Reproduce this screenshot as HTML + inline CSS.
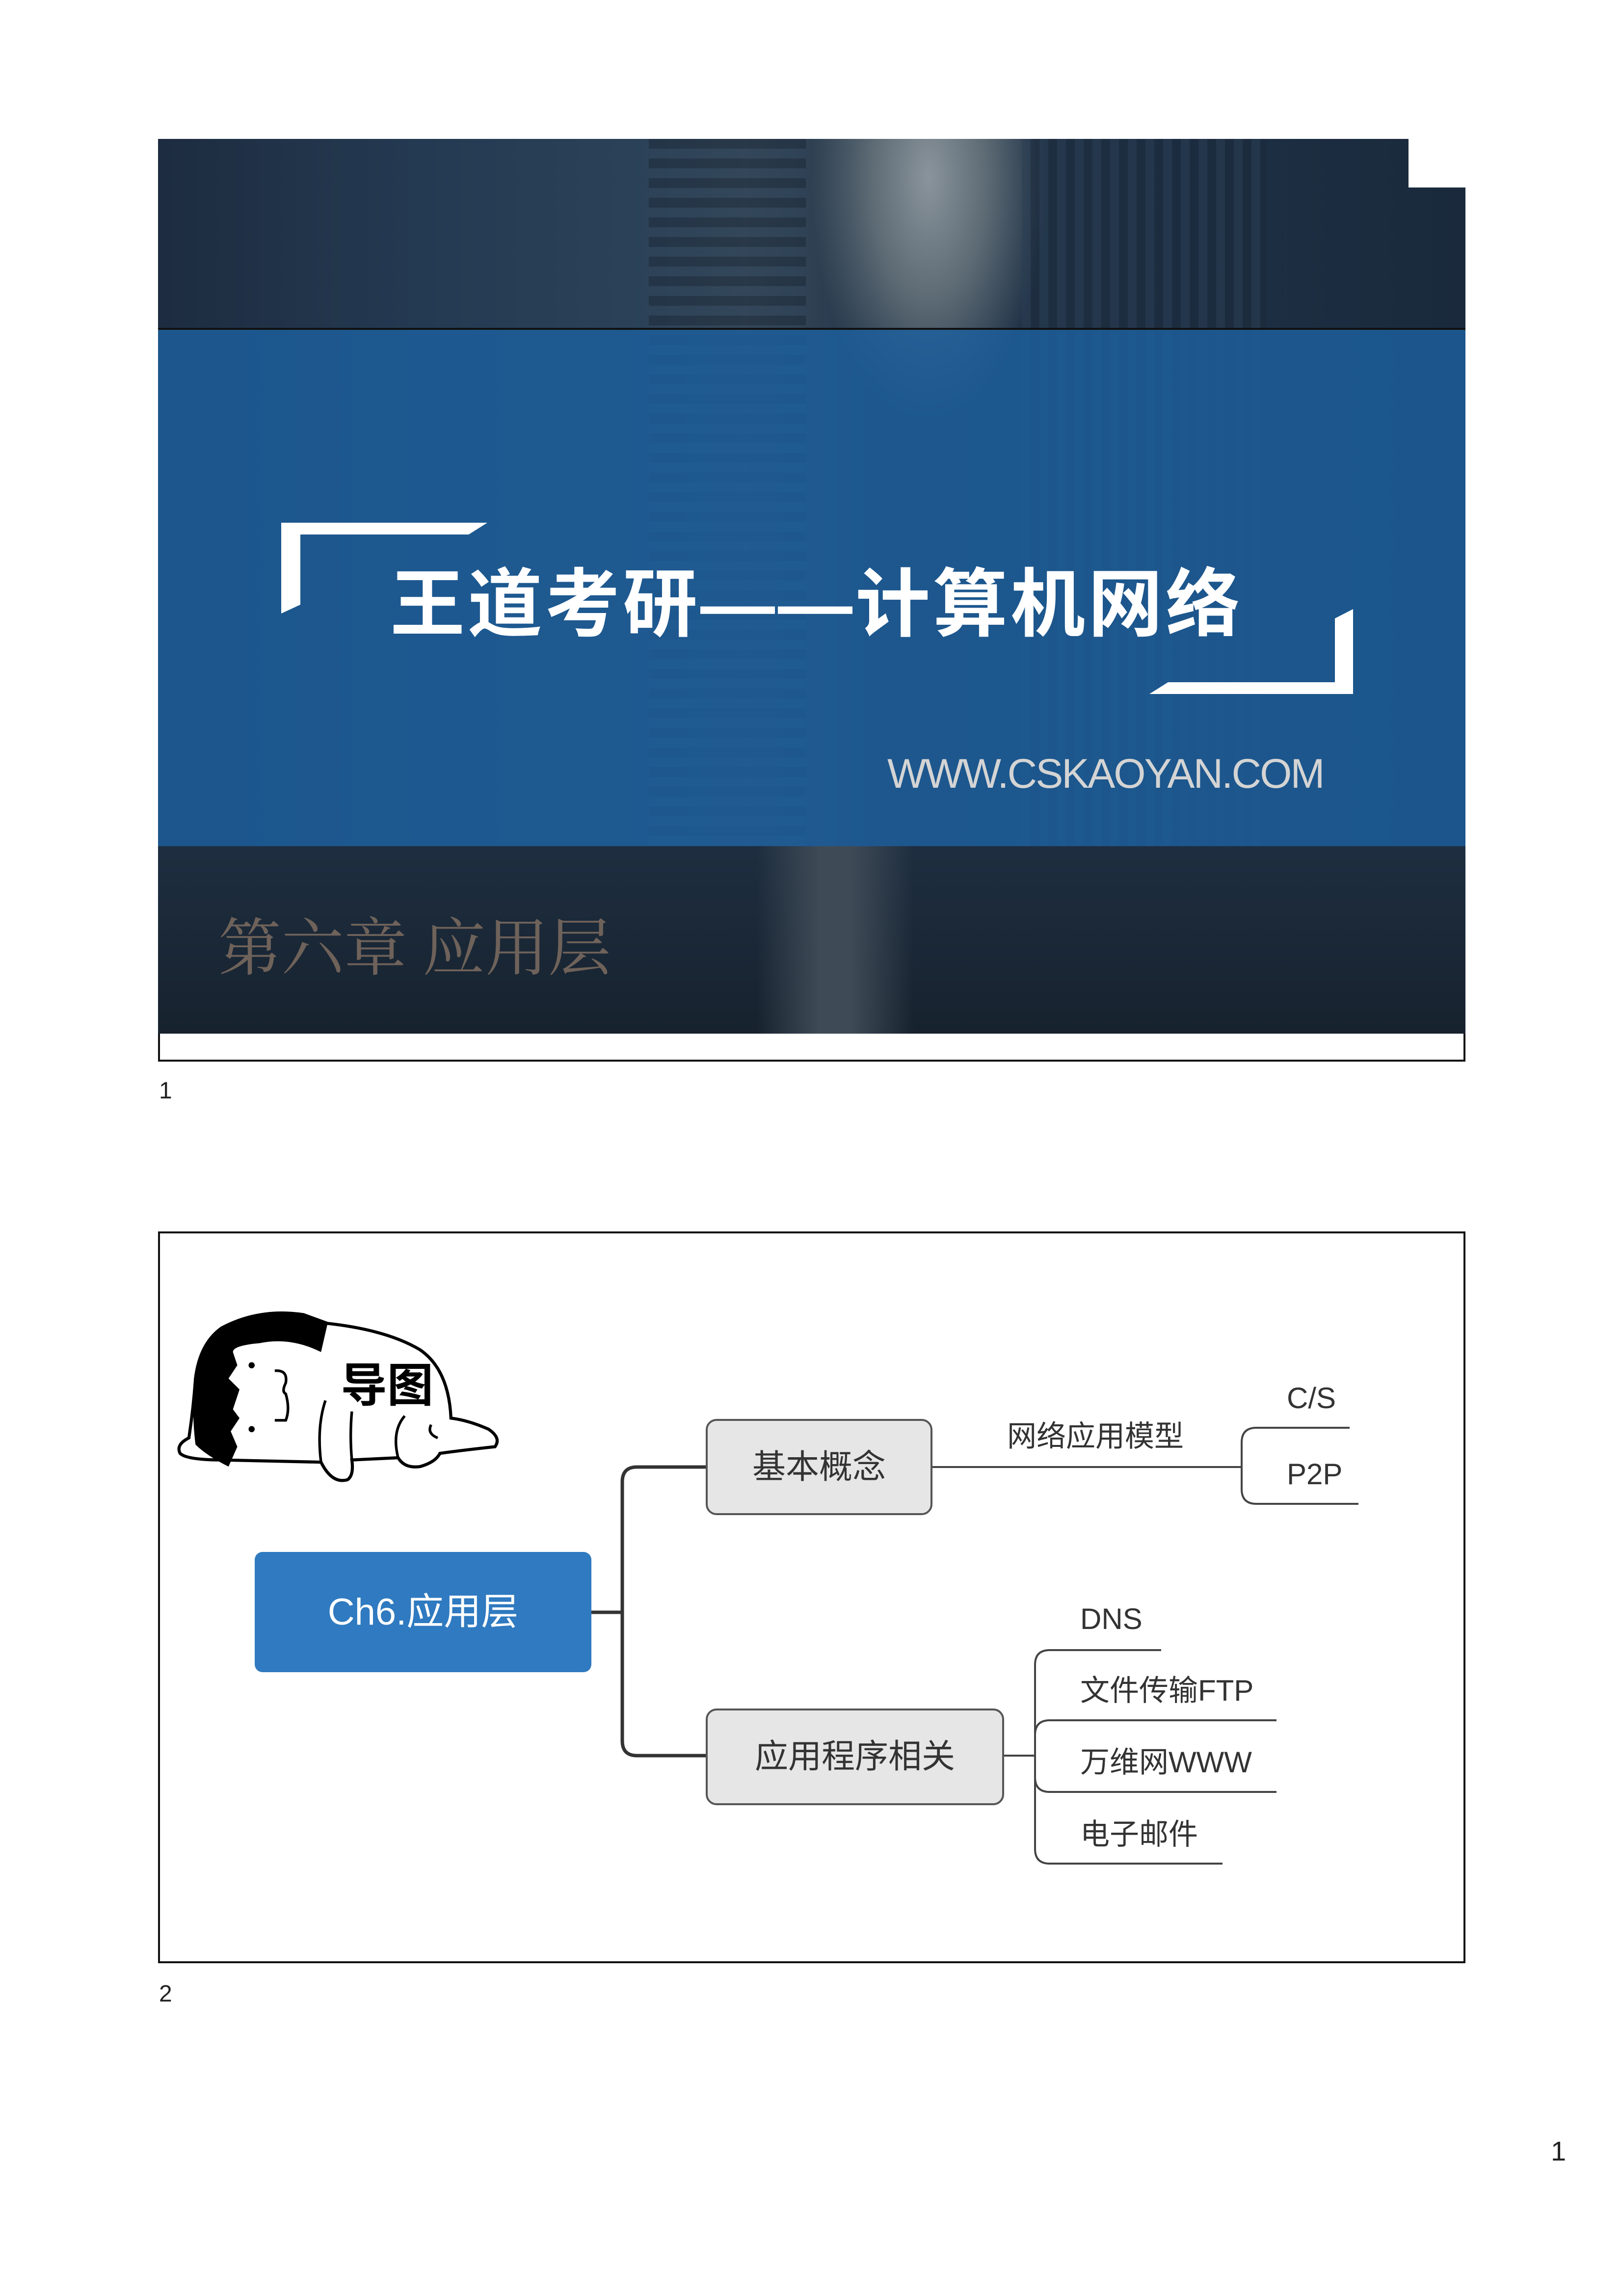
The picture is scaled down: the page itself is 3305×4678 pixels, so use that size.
<!DOCTYPE html>
<html><head><meta charset="utf-8">
<style>
html,body{margin:0;padding:0;background:#fff;}
body{width:3305px;height:4678px;position:relative;overflow:hidden;font-family:"Liberation Sans","Noto Sans CJK SC",sans-serif;}
.abs{position:absolute;}
.cn{font-family:"Liberation Sans","Noto Sans CJK SC",sans-serif;}
</style></head><body>

<!-- Slide 1 -->
<div class="abs" style="left:322px;top:283px;width:2664px;height:1880px;border:4px solid #111;box-sizing:border-box;border-top:none;"></div>
<div class="abs" style="left:322px;top:283px;width:2664px;height:1823px;overflow:hidden;
 background:
 radial-gradient(ellipse 240px 500px at 1570px 80px, #8a949c 0%, #5c6a74 50%, rgba(40,55,70,0) 100%),
 linear-gradient(90deg,#1d2c40 0%,#243a52 20%,#2b4258 38%,#3a4c5c 45%,#223448 55%,#1e3046 75%,#1a2a3c 100%);">
  <div class="abs" style="left:1000px;top:0;width:320px;height:1800px;background:repeating-linear-gradient(0deg,#2f4358 0 20px,#1e2c3c 20px 40px);opacity:.6"></div>
  <div class="abs" style="left:1760px;top:0;width:500px;height:1800px;background:repeating-linear-gradient(90deg,#2a3d52 0 18px,#1b2a3a 18px 36px);opacity:.5"></div>
  <div class="abs" style="left:0;top:1440px;width:2664px;height:383px;background:linear-gradient(180deg,#1e2e40,#17222e);"></div>
  <div class="abs" style="left:1220px;top:1440px;width:320px;height:383px;background:linear-gradient(90deg,rgba(60,72,84,0),#3e4a56 40%,#3e4a56 60%,rgba(60,72,84,0));"></div>
</div>
<div class="abs" style="left:2870px;top:280px;width:120px;height:102px;background:#fff;"></div>
<div class="abs" style="left:322px;top:668px;width:2664px;height:1056px;background:rgba(28,95,158,0.82);border-top:4px solid #111;box-sizing:border-box;"></div>
<svg class="abs" style="left:0;top:0" width="3305" height="2200">
 <polygon points="573,1065 993,1065 955,1089 612,1089 612,1232 573,1250" fill="#fff"/>
 <polygon points="2757,1241 2757,1414 2342,1414 2380,1390 2720,1390 2720,1260" fill="#fff"/>
</svg>
<div class="abs cn" style="left:795px;top:1140px;font-size:152px;font-weight:bold;color:#fff;line-height:184px;white-space:nowrap;letter-spacing:6px;">王道考研——计算机网络</div>
<div class="abs" style="left:1808px;top:1530px;font-size:84px;color:#d4d4d4;line-height:92px;white-space:nowrap;letter-spacing:-3px;">WWW.CSKAOYAN.COM</div>
<div class="abs" style="left:445px;top:1858px;font-size:128px;color:#6e625a;line-height:150px;white-space:nowrap;font-family:'Liberation Serif','Noto Serif CJK SC',serif;">第六章 应用层</div>
<div class="abs" style="left:324px;top:2195px;font-size:48px;color:#222;">1</div>

<!-- Slide 2 -->
<div class="abs" style="left:322px;top:2509px;width:2664px;height:1491px;border:4px solid #111;box-sizing:border-box;"></div>

<svg class="abs" style="left:340px;top:2620px" width="700" height="431" viewBox="0 0 1560 960">
 <path d="M100 690 Q40 720 60 760 Q90 790 250 790 L700 800 Q750 900 820 880 Q850 860 840 790 L1050 780 Q1080 830 1150 820 Q1220 800 1240 760 Q1350 745 1490 730 Q1520 690 1460 650 Q1370 610 1290 600 Q1280 380 1150 290 Q1000 200 730 170 L620 130 Q420 100 250 190 Q150 260 130 420 Q120 560 100 690 Z" fill="#fff" stroke="#000" stroke-width="14"/>
 <path d="M250 190 Q420 100 620 130 L730 170 L700 300 Q560 230 420 260 Q300 270 300 300 L320 360 L280 420 L330 470 L300 560 L330 600 L290 660 L320 730 L280 820 Q180 770 130 720 Q110 560 130 420 Q150 260 250 190 Z" fill="#000"/>
 <circle cx="385" cy="360" r="14" fill="#000"/><circle cx="385" cy="650" r="14" fill="#000"/>
 <path d="M490 385 Q550 380 540 440 Q520 480 540 490 Q560 560 540 610 L490 610" fill="none" stroke="#000" stroke-width="12"/>
 <path d="M720 520 Q680 640 700 800 M840 570 Q830 680 840 790 M1080 590 Q1020 660 1050 780 M1200 630 Q1180 670 1230 690" fill="none" stroke="#000" stroke-width="12"/>
 <text x="790" y="525" font-size="210" font-weight="bold" font-family="Liberation Sans,Noto Sans CJK SC,sans-serif" fill="#000">导图</text>
</svg>

<svg class="abs" style="left:0;top:0" width="3305" height="4678">
 <g fill="none" stroke="#333" stroke-width="7">
  <path d="M1205 3285 L1268 3285"/>
  <path d="M1438 2989 L1298 2989 Q1268 2989 1268 3019 L1268 3547 Q1268 3577 1298 3577 L1438 3577"/>
 </g>
 <g fill="none" stroke="#444" stroke-width="4">
  <path d="M1900 2989 L2530 2989"/>
  <path d="M2750 2909 L2560 2909 Q2530 2909 2530 2939 L2530 3034 Q2530 3064 2560 3064 L2768 3064"/>
  <path d="M2046 3577 L2109 3577"/>
  <path d="M2366 3362 L2139 3362 Q2109 3362 2109 3392 L2109 3767 Q2109 3797 2139 3797 L2491 3797"/>
  <path d="M2109 3535 Q2109 3505 2139 3505 L2601 3505"/>
  <path d="M2109 3621 Q2109 3651 2139 3651 L2601 3651"/>
 </g>
</svg>
<div class="abs" style="left:519px;top:3162px;width:686px;height:245px;background:#2f7ac0;border-radius:16px;color:#fff;font-size:76px;line-height:245px;text-align:center;">Ch6.应用层</div>
<div class="abs" style="left:1438px;top:2891px;width:462px;height:196px;background:#e6e6e6;border:4px solid #555;box-sizing:border-box;border-radius:22px;color:#333;font-size:68px;line-height:188px;text-align:center;">基本概念</div>
<div class="abs" style="left:1438px;top:3481px;width:608px;height:197px;background:#e6e6e6;border:4px solid #555;box-sizing:border-box;border-radius:22px;color:#333;font-size:68px;line-height:189px;text-align:center;">应用程序相关</div>
<div class="abs" style="left:2052px;top:2890px;font-size:60px;color:#333;line-height:74px;white-space:nowrap;">网络应用模型</div>
<div class="abs" style="left:2622px;top:2812px;font-size:60px;color:#333;line-height:74px;">C/S</div>
<div class="abs" style="left:2622px;top:2967px;font-size:60px;color:#333;line-height:74px;">P2P</div>
<div class="abs" style="left:2201px;top:3262px;font-size:60px;color:#333;line-height:74px;">DNS</div>
<div class="abs" style="left:2201px;top:3408px;font-size:60px;color:#333;line-height:74px;white-space:nowrap;">文件传输FTP</div>
<div class="abs" style="left:2201px;top:3554px;font-size:60px;color:#333;line-height:74px;white-space:nowrap;">万维网WWW</div>
<div class="abs" style="left:2201px;top:3701px;font-size:60px;color:#333;line-height:74px;white-space:nowrap;">电子邮件</div>
<div class="abs" style="left:324px;top:4035px;font-size:48px;color:#222;">2</div>
<div class="abs" style="left:3160px;top:4350px;font-size:56px;color:#222;">1</div>
</body></html>
